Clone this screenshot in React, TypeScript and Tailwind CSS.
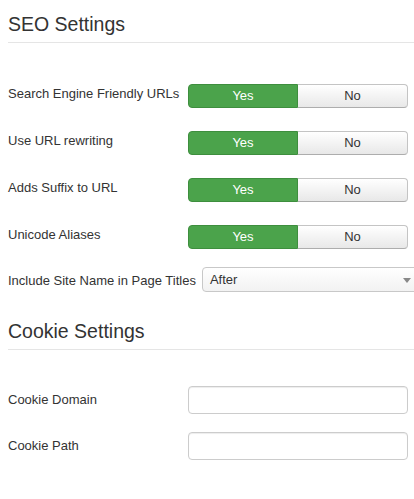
const font = { fontFamily: '"Liberation Sans", Arial, Helvetica, sans-serif' }

const toggles = [
  'Search Engine Friendly URLs',
  'Use URL rewriting',
  'Adds Suffix to URL',
  'Unicode Aliases',
]

function Heading({ title, className }: { title: string; className?: string }) {
  return (
    <div className={`border-b border-[#e5e5e5] pb-[4px] ${className ?? ''}`}>
      <h3 className="text-[19.5px] leading-[28px] text-[#333]">{title}</h3>
    </div>
  )
}

function YesNo() {
  return (
    <div className="flex h-[24px] w-[220px] shrink-0 text-[13px]">
      <button className="w-[110px] rounded-l-[4px] border border-[#3e8e3e] bg-[#4ba34b] text-white">
        Yes
      </button>
      <button className="w-[110px] rounded-r-[4px] border border-l-0 border-[#c4c4c4] border-b-[#adadad] bg-gradient-to-b from-white to-[#e8e8e8] text-[#333]">
        No
      </button>
    </div>
  )
}

export default function App() {
  return (
    <div className="w-[414px] overflow-hidden bg-white pl-[8px] text-[#333]" style={font}>
      <Heading title="SEO Settings" className="pt-[10px]" />

      <div className="mt-[41px] flex flex-col gap-[23px]">
        {toggles.map((label) => (
          <div key={label} className="flex items-start">
            <label className="w-[180px] shrink-0 pt-[1px] text-[13px] leading-[18px]">{label}</label>
            <YesNo />
          </div>
        ))}
      </div>

      <div className="mt-[18px] flex items-start">
        <label className="shrink-0 pt-[5px] text-[13px] leading-[18px]">Include Site Name in Page Titles</label>
        <div className="relative ml-[6px] flex h-[25px] w-[220px] shrink-0 items-center rounded-[4px] border border-[#c8c8c8] bg-gradient-to-b from-white to-[#f2f2f2] pl-[7px] text-[13px]">
          After
          <span className="absolute right-[10px] top-[10px] h-0 w-0 border-x-[4px] border-t-[5px] border-x-transparent border-t-[#888]" />
        </div>
      </div>

      <Heading title="Cookie Settings" className="mt-[25px]" />

      <div className="mt-[36px] flex flex-col gap-[18px]">
        {['Cookie Domain', 'Cookie Path'].map((label) => (
          <div key={label} className="flex items-center">
            <label className="w-[180px] shrink-0 text-[13px] leading-[18px]">{label}</label>
            <input
              type="text"
              className="h-[28px] w-[220px] rounded-[4px] border border-[#cccccc] bg-white shadow-[inset_0_1px_1px_rgba(0,0,0,0.075)] outline-none"
            />
          </div>
        ))}
      </div>
      <div className="h-[39px]" />
    </div>
  )
}
